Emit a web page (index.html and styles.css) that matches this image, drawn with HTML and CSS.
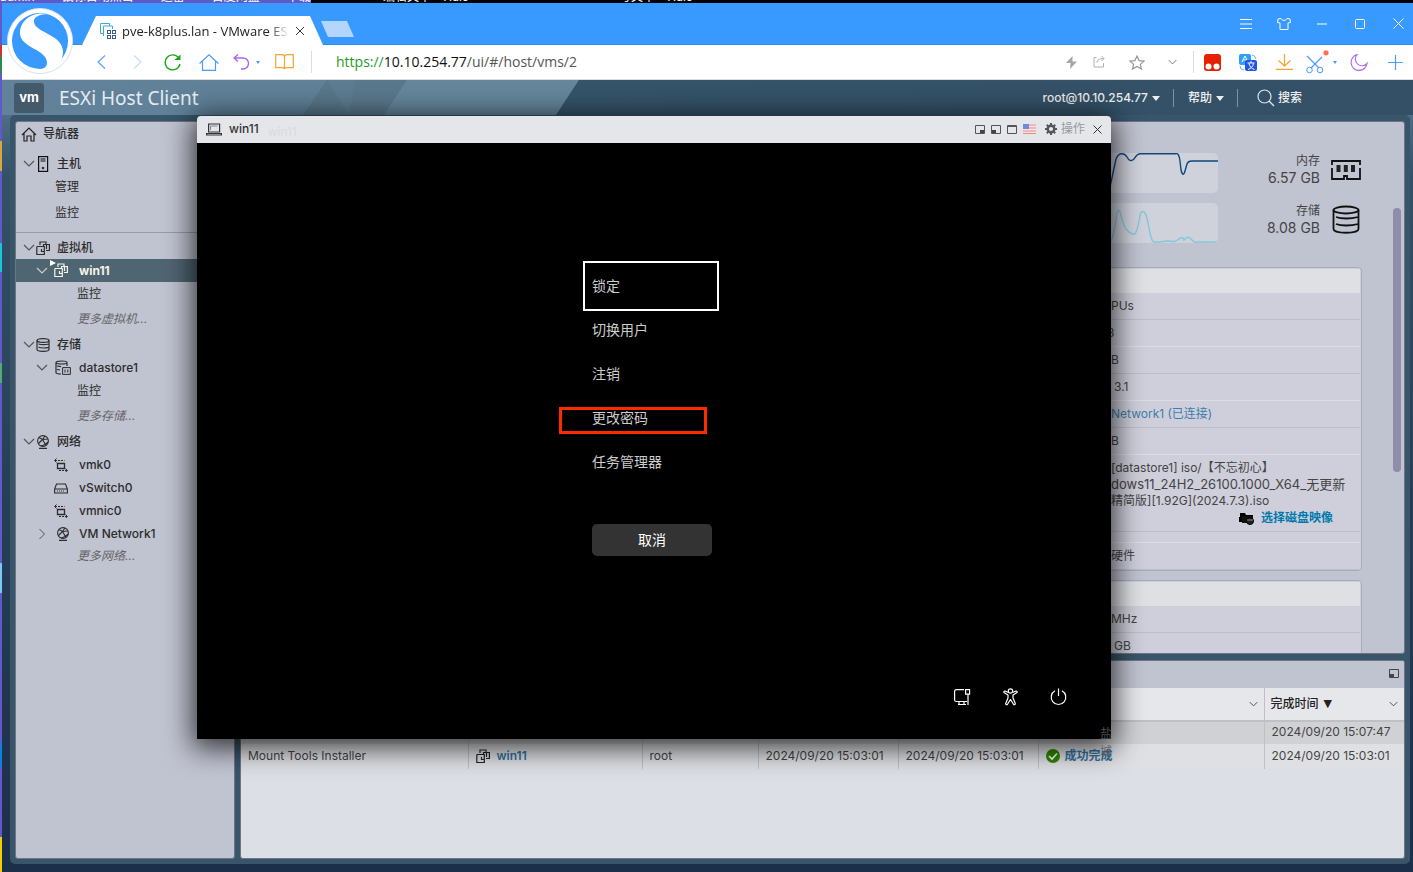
FILE: index.html
```html
<!DOCTYPE html>
<html lang="zh-CN">
<head>
<meta charset="utf-8">
<title>win11 - VMware ESXi</title>
<link rel="stylesheet" href="styles.css">
</head>
<body>
<svg class="defs" aria-hidden="true">
  <symbol id="vm" viewBox="0 0 14 14"><g fill="none" stroke="currentColor" stroke-width="1.2"><path d="M4 4V1h6v2.500M7 3.500h6.400v6H10M7.500 5V3.500M1 5.500h4.500M.8 5.500v8h7.500V10.500M5.500 5.500h2.800v5H5.500V8M10.500 4v4"/></g></symbol>
  <symbol id="down" viewBox="0 0 12 7"><path d="M1 1l5 5 5-5" fill="none" stroke="currentColor" stroke-width="1.200"/></symbol>
  <symbol id="disk" viewBox="0 0 14 14"><g fill="none" stroke="currentColor" stroke-width="1.200"><ellipse cx="7" cy="2.500" rx="6" ry="1.900"/><path d="M1 2.500v9c0 2.400 12 2.400 12 0v-9M2.500 6c3 .9 6.500.9 10.500 0M2.500 9.300c3 .9 6.500.9 10.500 0"/></g></symbol>
  <symbol id="globe" viewBox="0 0 14 14"><g fill="none" stroke="currentColor" stroke-width="1.100"><circle cx="7" cy="6" r="5.400"/><path d="M3 2.500l3.500 2L12 4M6.500 4.500L2.500 8.500M6.500 4.500l3 5L12 7M9.500 9.500L5 11M9 1L6.500 4.500M3 13.400h8"/></g></symbol>
  <symbol id="nic" viewBox="0 0 14 14"><g fill="none" stroke="currentColor"><path d="M3.500 5.500h7v5h-7z" stroke-width="1.300"/><path d="M1 2.500h9.500M13 12.500H4" stroke-dasharray="2 1"/><path d="M2.500.5l-2 2 2 2M11.500 10.500l2 2-2 1.500"/></g></symbol>
</svg>

<div class="desktop-strip">
  <div class="desktop-icons"><span>admin</span><span>鼠标自动点击</span><span>迅雷</span><span>百度网盘</span><span>下载</span></div>
  <div class="back-tabs"><span>编辑文章 - Halo</span><span>写文章 - Halo</span></div>
</div>

<div class="desktop">
<div class="browser">
  <div class="tabbar">
    <div class="tab">
      <svg width="16" height="16" viewBox="0 0 16 16" fill="none"><path d="M3 10.500H.5V.5h9V3M3.500 13V3h9v3" stroke="#3fa9dc"/><g stroke="#3b5b8c"><rect x="7.500" y="7.500" width="3" height="3"/><rect x="12.500" y="7.500" width="3" height="3"/><rect x="7.500" y="12.500" width="3" height="3"/><rect x="12.500" y="12.500" width="3" height="3"/></g></svg>
      <span class="tab-title">pve-k8plus.lan - VMware ESXi</span>
      <button class="plain" aria-label="关闭标签"><svg width="10" height="10" viewBox="0 0 10 10"><path d="M1 1l8 8M9 1L1 9" stroke="#333"/></svg></button>
    </div>
    <button class="new-tab" aria-label="新标签"></button>
    <div class="win-controls">
      <button class="plain" aria-label="菜单"><svg width="12" height="10" viewBox="0 0 12 10"><path d="M0 .5h12M0 5h12M0 9.500h12" stroke="#fff"/></svg></button>
      <button class="plain" aria-label="皮肤"><svg width="14" height="12" viewBox="0 0 14 12"><path d="M4 .5L1 1 .6 4.500 3 5v6.500h8V5l2.400-.5L13 1 10 .5C9 3 5 3 4 .5z" fill="none" stroke="#fff"/></svg></button>
      <button class="plain" aria-label="最小化"><svg width="10" height="2"><path d="M0 1h10" stroke="#fff"/></svg></button>
      <button class="plain" aria-label="最大化"><svg width="10" height="10"><rect x=".5" y=".5" width="9" height="9" rx="1" fill="none" stroke="#fff"/></svg></button>
      <button class="plain" aria-label="关闭"><svg width="11" height="11" viewBox="0 0 11 11"><path d="M.5.5l10 10M10.500.5l-10 10" stroke="#fff"/></svg></button>
    </div>
  </div>

  <div class="toolbar">
    <button class="tool" aria-label="后退"><svg width="9" height="14" viewBox="0 0 9 14"><path d="M8 .5L1 7l7 6.500" fill="none" stroke="#5aa5fb" stroke-width="1.200"/></svg></button>
    <button class="tool" aria-label="前进"><svg width="9" height="14" viewBox="0 0 9 14"><path d="M1 .5L8 7l-7 6.500" fill="none" stroke="#c4defd" stroke-width="1.200"/></svg></button>
    <button class="tool" aria-label="刷新"><svg width="18" height="17" viewBox="0 0 18 17"><path d="M16 10a7.500 7.500 0 1 1-1.200-6" fill="none" stroke="#18a818" stroke-width="1.400"/><path d="M16.500.5V6h-6z" fill="#18a818"/></svg></button>
    <button class="tool" aria-label="主页"><svg width="20" height="17" viewBox="0 0 20 17"><path d="M.6 9.500L10 .8l9.400 8.700M3.500 7v9.400h13V7" fill="none" stroke="#4a9bfa" stroke-width="1.200"/></svg></button>
    <button class="tool undo" aria-label="恢复"><svg width="17" height="16" viewBox="0 0 17 16"><path d="M2 4h8a5.500 5.500 0 0 1 0 11H8" fill="none" stroke="#ab62ef" stroke-width="1.400"/><path d="M5 .5L1 4l4 3.500" fill="none" stroke="#ab62ef" stroke-width="1.400"/></svg><i class="caret-s"></i></button>
    <button class="tool" aria-label="收藏夹"><svg width="19" height="16" viewBox="0 0 19 16"><path d="M.7.7H7Q9.500.7 9.500 3q0-2.300 2.500-2.300h6.300v13H12q-2.500 0-2.500 1.500 0-1.500-2.500-1.500H.7zM9.500 3v12" fill="none" stroke="#f6a531" stroke-width="1.200"/></svg></button>
    <i class="tool-rule"></i>
    <div class="url"><span class="scheme">https://</span><span class="host">10.10.254.77</span>/ui/#/host/vms/2</div>
    <button class="tool sm" aria-label="加速"><svg width="11" height="13" viewBox="0 0 11 13"><path d="M6.500 0L0 7h4.500L4 13l7-7.500H6.500z" fill="#a6a6a6"/></svg></button>
    <button class="tool sm" aria-label="分享"><svg width="12" height="12" viewBox="0 0 12 12"><path d="M3.500 1.500H1v9.500h9.500V7M4 7c0-3 2-4.500 7-4.500M8.500 0L11 2.500 8.500 5" fill="none" stroke="#b0b0b0"/></svg></button>
    <button class="tool star" aria-label="收藏"><svg width="16" height="15" viewBox="0 0 16 15"><path d="M8 1l2.100 4.600 5 .5-3.800 3.300L12.500 14 8 11.500 3.500 14l1.200-4.600L.9 6.100l5-.5z" fill="none" stroke="#969696" stroke-width="1.200"/></svg></button>
    <button class="tool grey" aria-label="展开"><svg width="9" height="6"><use href="#down"/></svg></button>
    <i class="tool-rule"></i>
    <button class="tool" aria-label="扩展"><svg width="17" height="17"><rect width="17" height="17" rx="3" fill="#e62000"/><circle cx="4.500" cy="12.500" r="3" fill="#fff"/><circle cx="12.500" cy="12.500" r="3" fill="#fff"/></svg></button>
    <button class="tool" aria-label="翻译"><svg width="18" height="17" viewBox="0 0 18 17"><rect width="12" height="11" rx="2" fill="#2ea0fb"/><path d="M3 8l3-6 3 6M4.500 6h3" stroke="#fff" fill="none"/><path d="M13 1q3 0 4 4M1 12q0 4 4 4" stroke="#5cb5fb" fill="none"/><rect x="6" y="6" width="12" height="11" rx="2" fill="#2354e8"/><path d="M8.500 9h7M12 7v2M9 15.500c3-1 5-3 5.500-6M15.500 15.500c-3-1-5-3-5.500-6" stroke="#fff" fill="none"/></svg></button>
    <button class="tool" aria-label="下载"><svg width="17" height="16" viewBox="0 0 17 16"><path d="M8.500 0v12M2.500 6.500l6 5.500 6-5.500M0 15.400h17" fill="none" stroke="#f8a02c" stroke-width="1.200"/></svg></button>
    <button class="tool cut" aria-label="截图"><svg width="23" height="24" viewBox="0 0 23 24"><path d="M1 6l12 12M16 7L5 18" stroke="#4a9bfa" stroke-width="1.200"/><circle cx="3.500" cy="20" r="2.800" fill="none" stroke="#4a9bfa"/><circle cx="14" cy="20" r="2.800" fill="none" stroke="#4a9bfa"/><circle cx="20" cy="2.800" r="2.600" fill="#ff6f50"/></svg><i class="caret-s"></i></button>
    <button class="tool" aria-label="夜间模式"><svg width="18" height="17" viewBox="0 0 18 17"><path d="M7 .7A8 8 0 1 0 17 9.500 6.500 6.500 0 0 1 7 .7z" fill="none" stroke="#b268f0" stroke-width="1.200"/></svg></button>
    <button class="tool" aria-label="添加"><svg width="15" height="15"><path d="M7.500 0v15M0 7.500h15" stroke="#4a9bfa" stroke-width="1.200"/></svg></button>
  </div>
  <svg class="logo" viewBox="0 0 66 66"><circle cx="33" cy="33" r="32.500" fill="#fff" stroke="#d8e2ee"/><circle cx="33" cy="33" r="28" fill="#3899ff"/><path d="M41 6C26 3 13 12 13 25c0 15 27 16 27 30 0 4-4 7-10 7 17 1 26-7 26-18 0-18-28-19-29-30-1-5 6-8 14-8z" fill="#fff"/></svg>

  <div class="page">
    <header class="host-header">
      <svg class="facets" width="620" height="35"><path d="M325 0L301 35h46z" fill="#587789"/><path d="M325 0l22 35h35L405 0z" fill="#5d7c91"/><path d="M353 0L347 35h35L405 0z" fill="#587789" opacity=".6"/><path d="M405 0L382 35h172L577 0z" fill="#66869b"/><path d="M577 0l-23 35h66V0z" fill="#355369"/></svg>
      <span class="vm-logo">vm</span>
      <span class="product">ESXi Host Client</span>
      <button class="head-btn">root@10.10.254.77<i class="caret"></i></button>
      <i class="head-rule"></i>
      <button class="head-btn">帮助<i class="caret"></i></button>
      <i class="head-rule last"></i>
      <button class="head-btn search"><svg width="18" height="18" viewBox="0 0 18 18"><circle cx="7.500" cy="7.500" r="6.500" fill="none" stroke="#dbe4ea" stroke-width="1.200"/><path d="M12 12l5 5" stroke="#dbe4ea" stroke-width="1.400"/></svg>搜索</button>
    </header>

    <main class="frame">
      <nav class="panel nav">
        <h2 class="nav-head"><svg width="16" height="15" viewBox="0 0 16 15"><path d="M1 8l7-7 7 7M3 6.500V14h3V9h4v5h3V6.500" fill="none" stroke="#222" stroke-width="1.200"/></svg>导航器</h2>
        <a class="row top" href="#host"><svg class="chev" width="12" height="7"><use href="#down"/></svg><svg width="14" height="16" viewBox="0 0 14 16"><rect x="2.600" y=".6" width="9" height="14.800" fill="none" stroke="#111" stroke-width="1.200"/><path d="M4.500 3h5M4.500 5h5" stroke="#111"/><circle cx="7" cy="12" r="1.300" fill="#333"/></svg><b>主机</b></a>
        <a class="row sub1" href="#manage">管理</a>
        <a class="row sub1 tall" href="#monitor">监控</a>
        <hr>
        <a class="row top" href="#vms"><svg class="chev" width="12" height="7"><use href="#down"/></svg><svg width="14" height="14"><use href="#vm"/></svg><b>虚拟机</b></a>
        <a class="row mid active" href="#win11"><svg class="chev" width="12" height="7"><use href="#down"/></svg><svg class="running" width="18" height="18" viewBox="0 0 18 18"><path d="M0 0l6 3-6 3z" fill="#fff"/><use href="#vm" x="4" y="3" width="14" height="14"/></svg><b>win11</b></a>
        <a class="row sub2" href="#vm-monitor">监控</a>
        <a class="row sub2 more" href="#more-vms">更多虚拟机...</a>
        <a class="row top" href="#storage"><svg class="chev" width="12" height="7"><use href="#down"/></svg><svg width="14" height="14"><use href="#disk"/></svg><b>存储</b></a>
        <a class="row mid" href="#datastore1"><svg class="chev" width="12" height="7"><use href="#down"/></svg><svg width="16" height="15" viewBox="0 0 16 15"><g fill="none" stroke="currentColor" stroke-width="1.200"><path d="M1 2.500c0-2 11-2 11 0s-11 2-11 0v10c0 1 2 1.500 5 1.500M12 2.500V6M2 6l4 .6M2 9.500l3 .5"/><path d="M7.600 7.600h7.800v6.800H7.600zM10 9.500v3M12.800 9.500v3" stroke-width="1"/></g></svg><b>datastore1</b></a>
        <a class="row sub2" href="#ds-monitor">监控</a>
        <a class="row sub2 more" href="#more-storage">更多存储...</a>
        <a class="row top" href="#network"><svg class="chev" width="12" height="7"><use href="#down"/></svg><svg width="14" height="14"><use href="#globe"/></svg><b>网络</b></a>
        <a class="row leaf" href="#vmk0"><svg width="14" height="14"><use href="#nic"/></svg><b>vmk0</b></a>
        <a class="row leaf" href="#vswitch0"><svg width="14" height="14" viewBox="0 0 14 14"><path d="M2.500 3h9L13.400 8v4H.6V8zM.6 8h12.800" fill="none" stroke="currentColor" stroke-width="1.100"/><path d="M3 10h8" stroke="currentColor" stroke-dasharray="1 1"/></svg><b>vSwitch0</b></a>
        <a class="row leaf" href="#vmnic0"><svg width="14" height="14"><use href="#nic"/></svg><b>vmnic0</b></a>
        <a class="row mid" href="#vm-network1"><svg class="chev" width="12" height="12" viewBox="0 0 12 12"><path d="M3.500 1l5 5-5 5" fill="none" stroke="currentColor"/></svg><svg width="14" height="14"><use href="#globe"/></svg><b>VM Network1</b></a>
        <a class="row sub2" href="#more-networks"><i class="dim">更多网络...</i></a>
      </nav>

      <div class="column">
        <section class="panel summary">
          <div class="stats">
            <div class="stat">
              <svg class="chart" width="200" height="40" viewBox="0 0 200 40"><path d="M80 40L92 34 98 6Q100 .7 104 .7 107 .7 109 4 112 10 116 6 119 1 122 .7H158Q161 0 162 8L163 17Q165 25 167 18L169 11Q170 8 174 8H200" fill="none" stroke="#11477f" stroke-width="1.400"/></svg>
              <p>内存<br><span>6.57 GB</span></p>
              <svg width="30" height="22" viewBox="0 0 30 22"><path d="M1 6V2h28v4M1 9v11h12v-3h3v3h13V9" fill="none" stroke="#111" stroke-width="1.800"/><path d="M5.500 6h4v7h-4zM12.800 6h4v7h-4zM20 6h4v7h-4z" fill="#222"/></svg>
            </div>
            <div class="stat">
              <svg class="chart" width="200" height="40" viewBox="0 0 200 40"><path d="M80 40Q90 40 93 38C97 32 98 7 100.500 7s4 18 9 20.500c8 8 9 2 11-7S122 8 125 8.500C131 9 131 39 136 39h6q5-1 8-1t5 .5 6-2.500 5 1q4-5 7-1t6 3H200" fill="none" stroke="#82c8dc" stroke-width="1.400"/></svg>
              <p>存储<br><span>8.08 GB</span></p>
              <svg width="30" height="30" viewBox="0 0 30 30"><g fill="none" stroke="#111" stroke-width="1.800"><ellipse cx="15" cy="5" rx="12.500" ry="3.500"/><path d="M2.500 5v19c0 5 25 5 25 0V5M5 12c5 2 15 2 22 0M5 19c5 2 15 2 22 0"/></g></svg>
            </div>
          </div>
          <div class="card">
            <div class="card-head"></div>
            <div class="fact">PUs</div>
            <div class="fact shallow">3</div>
            <div class="fact">B</div>
            <div class="fact deep">3.1</div>
            <div class="fact"><a href="#net">Network1 (已连接)</a></div>
            <div class="fact">B</div>
            <div class="fact media">[datastore1] iso/【不忘初心】<br><span class="big">dows11_24H2_26100.1000_X64_无更新</span><br>精简版][1.92G](2024.7.3).iso
              <button class="pick"><svg width="16" height="13" viewBox="0 0 16 13"><path d="M1 1h5l1 2h7v3H3v4H0V5h1z" fill="#000"/><path d="M3 4h11v7H3z" fill="#111"/><circle cx="11" cy="9" r="3.500" fill="#222" stroke="#000"/><path d="M8 8h6" stroke="#888"/></svg>选择磁盘映像</button></div>
            <div class="fact gap"></div>
            <div class="fact">硬件</div>
          </div>
          <div class="card">
            <div class="card-head"></div>
            <div class="fact">MHz</div>
            <div class="fact deep">GB</div>
          </div>
          <i class="scroll-thumb"></i>
        </section>

        <section class="panel tasks">
          <div class="tasks-head"><button class="plain" aria-label="最小化面板"><svg width="10" height="9"><path d="M.5.5h9v8h-9z" fill="none" stroke="#444"/><path d="M1 5h4v4H1z" fill="#444"/></svg></button></div>
          <table>
            <colgroup><col class="c1"><col class="c2"><col class="c3"><col class="c4"><col class="c4"><col class="c5"><col class="c6"></colgroup>
            <thead><tr><th></th><th></th><th></th><th></th><th></th><th><span class="th"><svg class="end" width="9" height="6"><use href="#down"/></svg></span></th><th><span class="th">完成时间 <i class="sort">▼</i><svg class="end" width="9" height="6"><use href="#down"/></svg></span></th></tr></thead>
            <tbody>
              <tr class="odd"><td></td><td></td><td></td><td></td><td></td><td></td><td>2024/09/20 15:07:47</td></tr>
              <tr><td>Mount Tools Installer</td><td><a class="ico" href="#win11"><svg class="dark" width="14" height="14"><use href="#vm"/></svg>win11</a></td><td>root</td><td>2024/09/20 15:03:01</td><td>2024/09/20 15:03:01</td><td><a class="ico done" href="#done"><svg width="14" height="14"><circle cx="7" cy="7" r="7" fill="#318700"/><path d="M3 7l3 3 5-5.500" fill="none" stroke="#fff" stroke-width="1.600"/></svg>成功完成</a></td><td>2024/09/20 15:03:01</td></tr>
            </tbody>
          </table>
        </section>
      </div>
    </main>

    <div class="console" role="dialog" aria-label="win11">
      <div class="console-head">
        <svg width="16" height="13" viewBox="0 0 16 13"><path d="M2.600 9V1h11v8zM.6 12V10.500h14.800V12z" fill="none" stroke="#333" stroke-width="1.200"/><path d="M4.500 7V3h7" stroke="#888" fill="none"/></svg>
        <span class="console-title">win11</span>
        <span class="ghost">win11</span>
        <div class="console-tools">
          <button class="plain" aria-label="右下停靠"><svg width="10" height="9"><path d="M.5.5h9v8h-9z" fill="none" stroke="#555"/><path d="M5 5h4v3H5z" fill="#444"/></svg></button>
          <button class="plain" aria-label="左下停靠"><svg width="10" height="9"><path d="M.5.5h9v8h-9z" fill="none" stroke="#555"/><path d="M1 5h4v3H1z" fill="#444"/></svg></button>
          <button class="plain" aria-label="最大化窗口"><svg width="10" height="9"><path d="M.5.5h9v8h-9zM0 1.500h10" fill="none" stroke="#555"/></svg></button>
          <button class="plain" aria-label="键盘布局"><svg width="13" height="10"><path fill="#f3e4e6" d="M0 0h13v10H0z"/><path d="M0 1h13M0 4h13M0 7h13M0 9.500h13" stroke="#e98c86"/><path fill="#6a8be0" d="M0 0h6v5H0z"/></svg></button>
          <button class="plain action"><svg width="12" height="12" viewBox="0 0 12 12"><circle cx="6" cy="6" r="3.300" fill="none" stroke="#555" stroke-width="2.400"/><path d="M6 0v2M6 10v2M0 6h2M10 6h2M1.800 1.800l1.400 1.400M8.800 8.800l1.400 1.400M10.200 1.800L8.800 3.200M3.200 8.800l-1.400 1.400" stroke="#555" stroke-width="2"/></svg>操作</button>
          <button class="plain" aria-label="关闭控制台"><svg width="9" height="9" viewBox="0 0 9 9"><path d="M.5.5l8 8M8.500.5l-8 8" stroke="#333"/></svg></button>
        </div>
      </div>
      <div class="screen">
        <div class="menu">
          <button class="item focus">锁定</button>
          <button class="item">切换用户</button>
          <button class="item">注销</button>
          <button class="item marked">更改密码</button>
          <button class="item">任务管理器</button>
          <button class="cancel">取消</button>
        </div>
        <div class="screen-foot">
          <button class="plain" aria-label="网络"><svg width="17" height="18" viewBox="0 0 17 18"><g fill="none" stroke="#fff" stroke-width="1.200"><path d="M10 1.600H2.500Q.6 1.600.6 3.500V12q0 1.500 1.900 1.500H13M5 13.500V16.500M10 13.500v3M4 16.500h8M11.600 1.600h4v4.500h-4zM14 6v11"/></g></svg></button>
          <button class="plain" aria-label="辅助功能"><svg width="15" height="18" viewBox="0 0 15 18"><g fill="none" stroke="#fff" stroke-width="1.200" stroke-linejoin="round"><circle cx="7.500" cy="3" r="2.200"/><path d="M5.500 4.500L2 3Q.5 3 1 4.600L5 7v3l-2.300 5.500q0 1.500 1.500 1.200L7.500 11.500l3.300 5.200q1.500.3 1.500-1.200L10 10V7l4-2.400Q14.500 3 13 3L9.500 4.500"/></g></svg></button>
          <button class="plain" aria-label="电源"><svg width="17" height="18" viewBox="0 0 17 18"><path d="M5 2.800a7.300 7.300 0 1 0 7 0M8.500.5V8" fill="none" stroke="#fff" stroke-width="1.200"/></svg></button>
        </div>
      </div>
      <span class="grip">盐城</span>
    </div>
  </div>
</div>
</div>
</body>
</html>
```

FILE: styles.css
```css
*, *::before, *::after { box-sizing: border-box; }
body {
  margin: 0;
  height: 100vh;
  display: flex;
  flex-direction: column;
  overflow: hidden;
  font: 12px/16px "Inter", "Noto Sans CJK SC", sans-serif;
  color: #444;
  background: #1b2f4a;
}
button { font: inherit; color: inherit; border: 0; background: none; padding: 0; }
.plain { display: flex; align-items: center; justify-content: center; }
a { color: inherit; text-decoration: none; }
svg { flex: none; display: block; }
.defs { position: absolute; width: 0; height: 0; }

.desktop-strip { height: 3px; flex: none; display: flex; overflow: hidden; background: #000; color: #fff; line-height: 12px; }
.desktop-icons { width: 311px; display: flex; align-items: flex-end; justify-content: space-between; background: #6259c8; }
.back-tabs { display: flex; align-items: flex-end; padding-left: 72px; gap: 150px; }
.desktop {
  flex: 1;
  min-height: 0;
  display: flex;
  padding-left: 2px;
  background: linear-gradient(#6259c8 0 42px, #c33 42px 54px, #2a8a50 54px 70px, #6259c8 70px 138px, #d8a840 138px 168px, #6259c8 168px 240px, #1bc4d8 240px 269px, #6259c8 269px 360px, #5a7 360px 380px, #6259c8 380px 560px, #7cc8f0 560px 590px, #6259c8 590px 740px, #1080e0 740px 764px, #6259c8 764px 834px, #f4d000 834px);
}
.browser { flex: 1; min-width: 0; position: relative; display: flex; flex-direction: column; }

.tabbar { height: 42px; flex: none; display: flex; align-items: flex-end; background: #3899ff; border-bottom: 1px solid #2f8cf0; }
.tab {
  margin: 0 0 -1px 80px;
  width: 241px;
  height: 29px;
  padding: 0 18px;
  display: flex;
  align-items: center;
  gap: 6px;
  background: #fff;
  clip-path: polygon(14px 0, 228px 0, 100% 100%, 0 100%);
  font: 13px/18px "Open Sans", sans-serif;
  color: #222;
}
.tab-title { flex: 1; overflow: hidden; white-space: nowrap; mask-image: linear-gradient(90deg, #000 88%, transparent); }
.new-tab { width: 33px; height: 16px; margin: 0 0 7px -2px; background: #b3d5ff; clip-path: polygon(0 0, 26px 0, 100% 100%, 7px 100%); }
.win-controls { margin-left: auto; display: flex; gap: 8px; align-self: stretch; }
.win-controls button { width: 30px; }

.toolbar { height: 35px; flex: none; display: flex; align-items: center; padding-left: 81px; background: #fff; border-bottom: 1px solid #d8dde2; }
.tool { width: 36px; height: 34px; display: flex; align-items: center; justify-content: center; }
.tool.sm { width: 28px; }
.tool.star { width: 48px; }
.tool.undo, .tool.cut { width: 39px; gap: 6px; }
.tool.cut { gap: 4px; }
.tool.grey { width: 32px; padding-right: 10px; color: #666; }
.caret-s { border: 2px solid transparent; border-top: 3px solid #4a9bfa; border-bottom: 0; }
.tool-rule { width: 1px; height: 22px; background: #ddd; }
.undo + .tool + .tool-rule { margin-left: 9px; }
.url { flex: 1; padding-left: 24px; font: 14px/20px "Open Sans", sans-serif; color: #555; }
.scheme { color: #1f9a1f; }
.host { color: #111; }
.logo { position: absolute; left: 5px; top: 5px; width: 66px; height: 66px; }

.page { flex: 1; min-height: 0; position: relative; display: flex; flex-direction: column; background: linear-gradient(#5f8098, #335168 12%, #274058 50%, #1b2f4a); }
.host-header { height: 35px; flex: none; position: relative; display: flex; align-items: center; padding: 0 111px 0 12px; background: linear-gradient(90deg, #61829a 0, #5e7f94 560px, #355369 600px, #335066); color: #eee; }
.facets { position: absolute; left: 0; top: 0; }
.vm-logo { position: relative; width: 30px; height: 30px; border-radius: 3px; background: #435a6b; color: #fff; font-weight: 700; font-size: 13px; line-height: 28px; text-align: center; }
.product { position: relative; flex: 1; margin-left: 15px; font: 400 19px/24px "Noto Sans", sans-serif; color: #e4ecf1; }
.head-btn { display: flex; align-items: center; gap: 4px; font-weight: 500; }
.head-btn.search { gap: 3px; margin-left: 19px; }
.caret { border: 4px solid transparent; border-top: 5px solid #eee; border-bottom: 0; margin-top: 2px; }
.head-rule { width: 1px; height: 18px; background: #7f94a2; margin: 0 14px 0 13px; }
.head-rule.last { margin-right: 0; }

.frame { flex: 1; min-height: 0; display: flex; gap: 5px; margin: 0 3px 8px 8px; padding: 6px 5px 5px; border-radius: 5px; background: #38556a; }
.panel { border: 1px solid #6f7585; border-radius: 3px; background: #c0c3d0; overflow: hidden; }
.nav { width: 220px; flex: none; color: #2c2c2c; }
.nav-head { margin: 0 0 6px; height: 24px; padding-left: 5px; display: flex; align-items: center; gap: 6px; font-size: 12px; font-weight: 500; }
.row { height: 23px; display: flex; align-items: center; }
.row b { font-weight: 500; }
.row .chev { color: #555; }
.top { padding-left: 7px; }
.top .chev { margin-right: 1px; }
.top b { margin-left: 7px; }
.mid { padding-left: 20px; }
.mid .chev { margin-right: 7px; }
.mid svg + svg { width: 16px; }
.mid b { margin-left: 8px; }
.leaf { padding-left: 38px; }
.leaf b { margin-left: 11px; }
.sub1 { padding-left: 39px; }
.sub2 { padding-left: 61px; }
.tall { height: 30px; }
.more { height: 28px; font-style: italic; color: #666; }
.dim { color: #666; margin-bottom: 2px; }
.nav hr { border: 0; border-top: 1px solid #989ba6; margin: 4px 0 3px; }
.active { background: #506572; color: #f4f4e8; }
.active .chev { color: #ccc; }
.mid .running { width: 18px; margin-left: -5px; margin-right: 3px; margin-bottom: 3px; }
.active b { font-weight: 700; }

.column { flex: 1; min-width: 0; display: flex; flex-direction: column; gap: 6px; }
.summary { flex: 1; min-height: 0; position: relative; padding: 31px 42px 0 0; }
.stats { display: grid; gap: 10px; margin: 0 1px 24px 0; }
.stat { display: flex; justify-content: flex-end; align-items: center; height: 40px; gap: 11px; }
.stat p { margin: 0; padding-bottom: 7px; width: 91px; text-align: right; line-height: 17px; }
.stat p + svg { margin-bottom: 6px; }
.stat span { font-size: 14px; }
.chart { border-radius: 5px; background: #cfd2db; }
.card { margin: 0 0 9px 300px; border: 1px solid #a8abbb; border-radius: 4px; background: #cfcfdb; padding: 1px 1px 0; }
.card-head { height: 24px; background: #dfe0e4; }
.fact { height: 27px; padding: 5px 0 5px calc(100% - 249px); border-bottom: 1px solid #bdbdcb; white-space: nowrap; }
.fact:nth-child(odd) { border-color: #dcdce4; }
.fact.deep { padding-left: calc(100% - 246px); }
.fact.shallow { padding-left: calc(100% - 253px); }
.fact a { color: #3d7dac; }
.fact.media { height: 77px; }
.fact.gap { height: 11px; }
.big { font-size: 13px; }
.pick { display: flex; align-items: center; gap: 6px; margin-left: 128px; color: #0079ad; font-weight: 600; line-height: 18px; }
.scroll-thumb { position: absolute; right: 3px; top: 86px; width: 8px; height: 264px; border-radius: 4px; background: #8e8daa; }

.tasks { height: 199px; flex: none; background: #dcdfe6; }
.tasks-head { height: 27px; background: #c0c3d0; display: flex; align-items: center; justify-content: flex-end; padding: 0 5px 2px 0; }
table { width: 100%; table-layout: fixed; border-collapse: collapse; }
.c1 { width: 227px; } .c2 { width: 174px; } .c3 { width: 116px; } .c4 { width: 140px; } .c6 { width: 140px; }
th { height: 33px; padding: 0 6px; background: #e6e7eb; border-bottom: 2px solid #bfc0c5; text-align: left; color: #222; font-weight: 500; }
.th { display: flex; align-items: center; gap: 5px; }
.sort { font: 11px/14px "DejaVu Sans", sans-serif; }
.end { margin-left: auto; color: #444; }
td { height: 25px; padding: 0 7px 2px; background: #dfe0e4; white-space: nowrap; }
.odd td { height: 23px; background: #d0d1d5; }
th + th, td + td { border-left: 1px solid #bfc0c6; }
.ico { display: flex; align-items: center; gap: 7px; color: #3371a0; font-weight: 600; }
.ico.done { gap: 5px; }
.dark { color: #222; }

.console {
  position: absolute;
  left: 195px;
  right: 302px;
  top: 36px;
  bottom: 133px;
  display: flex;
  flex-direction: column;
  border-radius: 4px 4px 0 0;
  box-shadow: 0 5px 28px 4px rgba(0, 0, 0, .75);
}
.console-head { height: 27px; flex: none; display: flex; align-items: center; gap: 7px; padding: 0 9px 1px; border-radius: 4px 4px 0 0; background: #e5e6ea; color: #333; }
.console-title { font-weight: 500; }
.ghost { flex: 1; padding: 6px 0 0 2px; color: #d9dae0; }
.console-tools { display: flex; align-items: center; gap: 6px; }
.action { gap: 4px; margin: 0 2px 0 3px; color: #999; }
.screen { flex: 1; display: flex; flex-direction: column; justify-content: space-between; background: #000; color: #ccc; font: 14px/20px "Noto Sans CJK SC", sans-serif; }
.menu { align-self: center; margin: 121px 6px 0 0; width: 130px; display: flex; flex-direction: column; }
.item { height: 44px; padding: 0 0 2px 6px; text-align: left; position: relative; }
.focus { outline: 2px solid #fff; outline-offset: 1px; }
.marked::after { content: ""; position: absolute; left: -27px; top: 11px; width: 148px; height: 27px; border: 3px solid #ff2a00; }
.cancel { margin: 40px 4px 0 6px; padding-bottom: 2px; height: 32px; border-radius: 5px; background: #333; color: #fff; }
.screen-foot { display: flex; justify-content: flex-end; gap: 32px; padding: 0 44px 33px; }
.grip { position: absolute; right: -1px; bottom: -22px; width: 12px; font-size: 12px; line-height: 18px; color: rgba(90, 90, 90, .85); word-break: break-all; }
```
